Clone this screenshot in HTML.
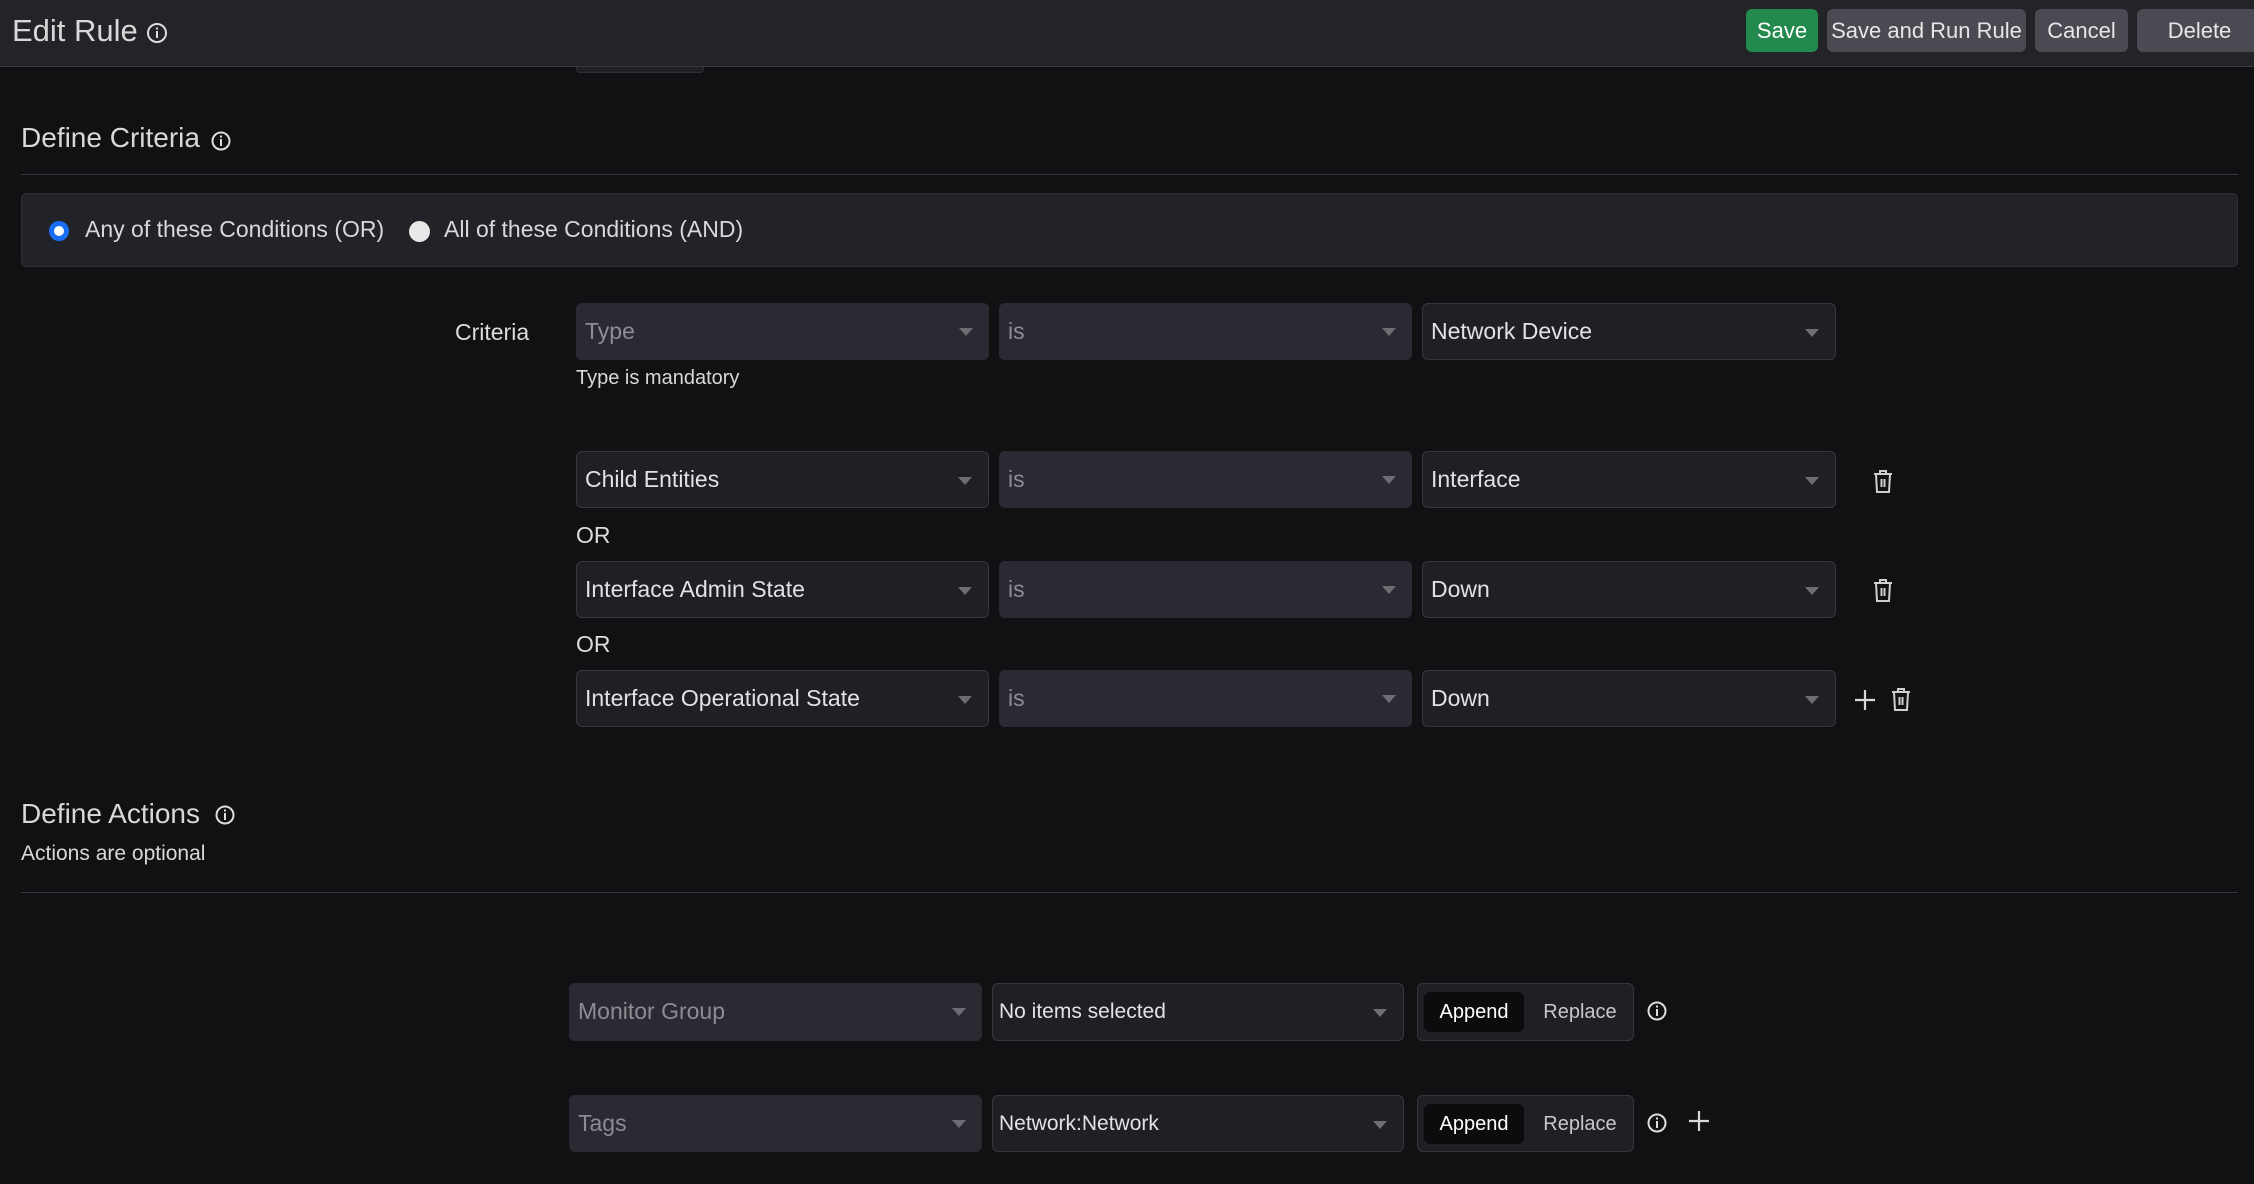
<!DOCTYPE html>
<html><head><meta charset="utf-8">
<style>
*{box-sizing:border-box;margin:0;padding:0}
body{width:2254px;height:1184px;background:#111114;font-family:"Liberation Sans",sans-serif;color:#dcdcdc;position:relative;overflow:hidden}
.a{position:absolute}
.hdr{left:0;top:0;width:2254px;height:67px;background:#232428;border-bottom:1px solid #3a3b40}
.btn{position:absolute;top:9px;height:43px;border-radius:6px;background:#4a4b52;color:#e6e6e6;font-size:22px;line-height:43px;text-align:center}
.sel{position:absolute;height:57px;border-radius:6px;font-size:23px;line-height:57px;padding-left:9px}
.dis{background:#2a2b32;color:#8c8d93}
.en{background:#1f2025;border:1px solid #36373d;color:#e2e2e2;line-height:55px;padding-left:8px}
.sel:after{content:"";position:absolute;right:16px;top:25px;border-left:7px solid transparent;border-right:7px solid transparent;border-top:8px solid #6d6e74}
.seg{position:absolute;height:58px;width:217px;border-radius:6px;background:#1f2025;border:1px solid #36373d}
.seg .ap{position:absolute;left:6px;top:8px;width:100px;height:40px;border-radius:6px;background:#0c0c0e;color:#fff;font-size:20px;line-height:40px;text-align:center}
.seg .rp{position:absolute;left:112px;top:8px;width:100px;height:40px;color:#c8c8c8;font-size:20px;line-height:40px;text-align:center}
.lbl{font-size:23px;color:#dcdcdc}
</style></head><body>
<div class="a hdr"></div>
<div class="a" style="left:12px;top:13px;font-size:31px;color:#d8d8d8">Edit Rule</div>
<svg class="a" style="left:146px;top:22px" width="22" height="22" viewBox="0 0 22 22"><circle cx="11" cy="11" r="9" fill="none" stroke="#ddd" stroke-width="2"/><rect x="10" y="9" width="2" height="7" fill="#ddd"/><rect x="10" y="5.5" width="2" height="2" fill="#ddd"/></svg>
<div class="btn" style="left:1746px;width:72px;background:#238a4e;color:#fff">Save</div>
<div class="btn" style="left:1827px;width:199px">Save and Run Rule</div>
<div class="btn" style="left:2035px;width:93px">Cancel</div>
<div class="btn" style="left:2137px;width:125px">Delete</div>
<div class="a" style="left:576px;top:67px;width:128px;height:6px;background:#1f2025;border-radius:0 0 4px 4px;border:1px solid #2e2f34;border-top:none"></div>

<div class="a" style="left:21px;top:122px;font-size:28px;color:#d8d8d8">Define Criteria</div>
<svg class="a" style="left:210px;top:130px" width="22" height="22" viewBox="0 0 22 22"><circle cx="11" cy="11" r="8.5" fill="none" stroke="#ddd" stroke-width="2"/><rect x="10" y="9" width="2" height="7" fill="#ddd"/><rect x="10" y="5.5" width="2" height="2" fill="#ddd"/></svg>
<div class="a" style="left:21px;top:174px;width:2217px;height:1px;background:#36373c"></div>
<div class="a" style="left:21px;top:193px;width:2217px;height:74px;background:#222328;border:1px solid #2e2f34;border-radius:5px"></div>
<div class="a" style="left:49px;top:221px;width:20px;height:20px;border-radius:50%;background:#fff;border:5px solid #1a6ef5"></div>
<div class="a" style="left:85px;top:216px;font-size:23px;color:#d8d8d8">Any of these Conditions (OR)</div>
<div class="a" style="left:409px;top:221px;width:21px;height:21px;border-radius:50%;background:#e8e8e8"></div>
<div class="a" style="left:444px;top:216px;font-size:23px;color:#d8d8d8">All of these Conditions (AND)</div>

<div class="a lbl" style="left:455px;top:319px">Criteria</div>
<div class="sel dis" style="left:576px;top:303px;width:413px">Type</div>
<div class="sel dis" style="left:999px;top:303px;width:413px">is</div>
<div class="sel en" style="left:1422px;top:303px;width:414px">Network Device</div>
<div class="a" style="left:576px;top:367px;font-size:20px;color:#d8d8d8">Type is mandatory</div>

<div class="sel en" style="left:576px;top:451px;width:413px">Child Entities</div>
<div class="sel dis" style="left:999px;top:451px;width:413px">is</div>
<div class="sel en" style="left:1422px;top:451px;width:414px">Interface</div>
<div class="a lbl" style="left:576px;top:522px">OR</div>
<div class="sel en" style="left:576px;top:561px;width:413px">Interface Admin State</div>
<div class="sel dis" style="left:999px;top:561px;width:413px">is</div>
<div class="sel en" style="left:1422px;top:561px;width:414px">Down</div>
<div class="a lbl" style="left:576px;top:631px">OR</div>
<div class="sel en" style="left:576px;top:670px;width:413px">Interface Operational State</div>
<div class="sel dis" style="left:999px;top:670px;width:413px">is</div>
<div class="sel en" style="left:1422px;top:670px;width:414px">Down</div>

<svg width="0" height="0" style="position:absolute"><defs><g id="tr" fill="none" stroke="#cfcfcf" stroke-width="2"><path d="M1 5h18M7 5V2h6v3M3 5l1 18h12l1-18M8.5 10v8M11.5 10v8"/></g></defs></svg>
<svg class="a" style="left:1873px;top:469px" width="20" height="25"><use href="#tr"/></svg>
<svg class="a" style="left:1873px;top:578px" width="20" height="25"><use href="#tr"/></svg>
<svg class="a" style="left:1891px;top:687px" width="20" height="25"><use href="#tr"/></svg>
<svg class="a" style="left:1854px;top:689px" width="22" height="22"><path d="M11 1v20M1 11h20" stroke="#d8d8d8" stroke-width="2.2"/></svg>

<div class="a" style="left:21px;top:798px;font-size:28px;color:#d8d8d8">Define Actions</div>
<svg class="a" style="left:214px;top:804px" width="22" height="22" viewBox="0 0 22 22"><circle cx="11" cy="11" r="8.5" fill="none" stroke="#ddd" stroke-width="2"/><rect x="10" y="9" width="2" height="7" fill="#ddd"/><rect x="10" y="5.5" width="2" height="2" fill="#ddd"/></svg>
<div class="a" style="left:21px;top:842px;font-size:21px;color:#d8d8d8">Actions are optional</div>
<div class="a" style="left:21px;top:892px;width:2217px;height:1px;background:#36373c"></div>

<div class="sel dis" style="left:569px;top:983px;width:413px;height:58px">Monitor Group</div>
<div class="sel en" style="left:992px;top:983px;width:412px;height:58px;font-size:21px;padding-left:6px">No items selected</div>
<div class="seg" style="left:1417px;top:983px"><div class="ap">Append</div><div class="rp">Replace</div></div>
<svg class="a" style="left:1646px;top:1000px" width="22" height="22" viewBox="0 0 22 22"><circle cx="11" cy="11" r="8.5" fill="none" stroke="#ddd" stroke-width="2"/><rect x="10" y="9" width="2" height="7" fill="#ddd"/><rect x="10" y="5.5" width="2" height="2" fill="#ddd"/></svg>

<div class="sel dis" style="left:569px;top:1095px;width:413px;height:57px">Tags</div>
<div class="sel en" style="left:992px;top:1095px;width:412px;height:57px;font-size:21px;padding-left:6px">Network:Network</div>
<div class="seg" style="left:1417px;top:1095px;height:57px"><div class="ap">Append</div><div class="rp">Replace</div></div>
<svg class="a" style="left:1646px;top:1112px" width="22" height="22" viewBox="0 0 22 22"><circle cx="11" cy="11" r="8.5" fill="none" stroke="#ddd" stroke-width="2"/><rect x="10" y="9" width="2" height="7" fill="#ddd"/><rect x="10" y="5.5" width="2" height="2" fill="#ddd"/></svg>
<svg class="a" style="left:1688px;top:1110px" width="22" height="22"><path d="M11 1v20M1 11h20" stroke="#d8d8d8" stroke-width="2.2"/></svg>
</body></html>
